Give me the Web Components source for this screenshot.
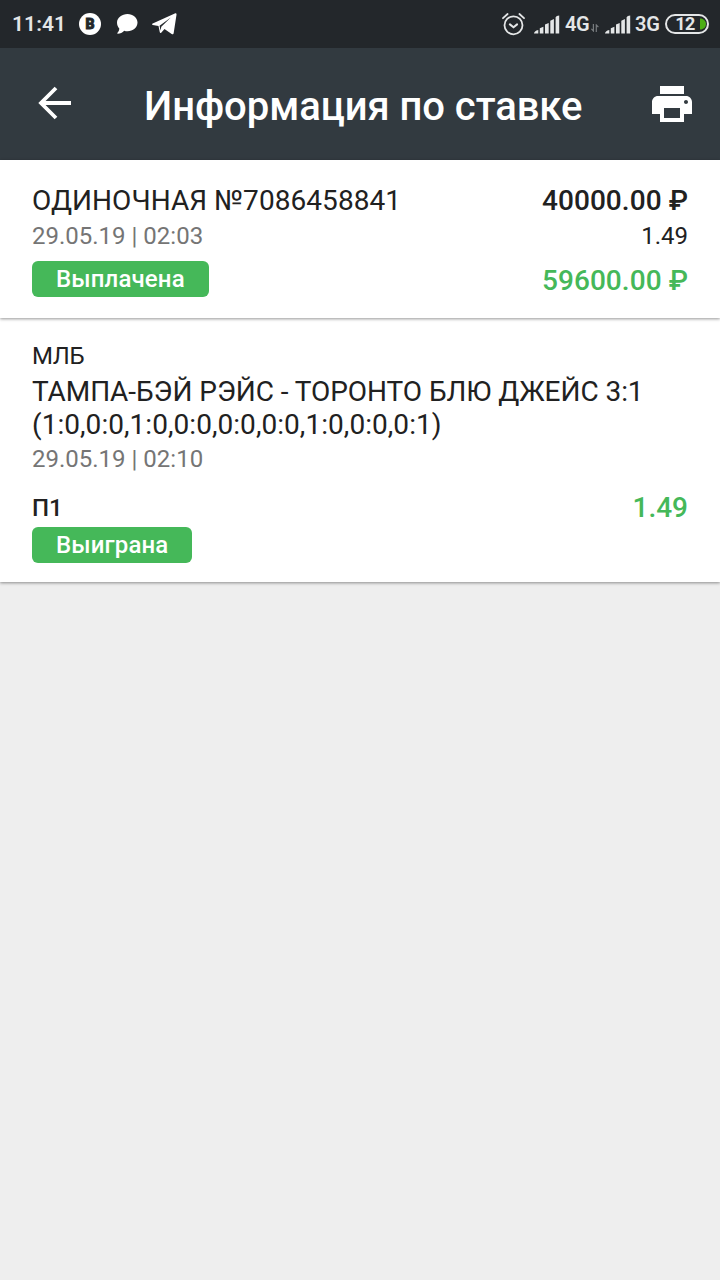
<!DOCTYPE html>
<html lang="ru">
<head>
<meta charset="utf-8">
<title>Информация по ставке</title>
<style>
  html, body { margin: 0; height: 100%; }
  body { background: #eeeeee; color: #212121; font-family: Roboto, "Liberation Sans", sans-serif; overflow: hidden; }
</style>
</head>
<body>
<bet-screen></bet-screen>
<script>
const define = (name, html) => {
  const template = document.createElement('template');
  template.innerHTML = html;
  customElements.define(name, class extends HTMLElement {
    constructor() {
      super();
      this.attachShadow({ mode: 'open' }).append(template.content.cloneNode(true));
    }
  });
};

define('signal-bars', `
<style>:host{display:block;width:26px;height:19px}svg{display:block}</style>
<svg width="26" height="19" viewBox="0 0 26 19" fill="#e4e6e7">
  <path d="M0 18.500q0-2.600 4.300-3.600v3.600zM5.800 13.200l3.600-1.400v6.700H5.800zM11 9.600l3.700-1.600v10.500H11zM16.300 5.700l3.600-1.700v14.500h-3.600zM21.600 2.200q.8-1.700 3.600-1.800v18.100h-3.600z"/>
</svg>`);

define('battery-level', `
<style>
  :host{display:flex;box-sizing:border-box;width:44px;height:20px;border:2px solid #e4e6e7;border-radius:10px;padding:1px;align-items:center}
  span{flex:1;text-align:center;font:700 18px/16px Roboto,sans-serif;letter-spacing:-.6px;padding-left:2px}
  svg{display:block}
</style>
<span><slot></slot></span>
<svg width="6" height="14" viewBox="0 0 6 14"><path d="M0 1.500h1.500Q6 3 6 7T1.500 12.500H0z" fill="#4cae15"/></svg>`);

define('status-bar', `
<style>
  :host{display:flex;height:48px;box-sizing:border-box;background:#23272b;color:#e4e6e7;align-items:center;padding:0 11px 0 12px;justify-content:space-between;font-size:20px;font-weight:600;line-height:24px}
  .g{display:flex;align-items:center}
  svg{display:block}
  .clock{width:67px;letter-spacing:.1px;font-size:21px}
  .chat{margin-left:15px}.send{margin-left:14px}
  .alarm{margin-right:9px}
  .n1{width:25px;margin-left:5px;letter-spacing:-.5px}.n2{width:25px;margin-left:4px;letter-spacing:-.3px}
  .arrows{margin:8px 6px 0 1px}
  battery-level{margin-left:5px}
</style>
<div class="g">
  <span class="clock">11:41</span>
  <svg width="22" height="22" viewBox="0 0 22 22"><circle cx="11" cy="11" r="11" fill="#fff"/><text x="11" y="16.200" text-anchor="middle" font-family="Roboto" font-size="14" font-weight="900" fill="#23272b" stroke="#23272b" stroke-width=".9">B</text></svg>
  <svg class="chat" width="22" height="20" viewBox="0 0 22 20"><path d="M11.500 0C17 0 21.500 3.600 21.500 8.600S17 17.200 11.500 17.200c-1.200 0-2.300-.1-3.300-.5C6.600 18.500 4 19.700 1.800 19.700c-.6 0-.7-.5-.3-.9 1.200-1.200 1.800-2.700 1.800-4.200C1.800 13 1 10.900 1 8.600 1 3.600 6 0 11.500 0z" fill="#fff"/></svg>
  <svg class="send" width="25" height="22" viewBox="0 0 25 22"><path d="M.7 10.500 22.800.4c1.200-.5 1.900 0 1.700 1.300L21.700 20.100c-.2 1.200-1 1.600-2 .9L12.500 16l-3.300 3.700c-.5.5-1.200.4-1.400-.4L6.500 13 .8 11.900c-.9-.2-.9-1-.1-1.400zM7.600 12.800l.9 4.700.8-3.700 9.500-9.300z" fill="#fff" fill-rule="evenodd"/></svg>
</div>
<div class="g">
  <svg class="alarm" width="23" height="23" viewBox="0 0 23 23" fill="none" stroke="#e4e6e7" stroke-width="1.800" stroke-linecap="round"><circle cx="11.500" cy="12.300" r="9"/><path d="M1 5.200 5.600 1M22 5.200 17.400 1"/><path d="m7.900 11.400 3.600 2.900 3.600-2.900" stroke-width="2"/></svg>
  <signal-bars></signal-bars><span class="n1">4G</span>
  <svg class="arrows" width="8" height="8" viewBox="0 0 8 8" fill="none" stroke="#777b7e" stroke-width="1.200"><path d="M2.400 0v7L.3 4.800M5.300 8V1l2.100 2.200"/></svg>
  <signal-bars></signal-bars><span class="n2">3G</span>
  <battery-level>12</battery-level>
</div>`);

define('app-header', `
<style>
  :host{display:flex;height:112px;box-sizing:border-box;background:#323a40;color:#fff;align-items:center;padding:0 28px 0 38px}
  svg{display:block}
  .back{margin-bottom:2px}
  h1{flex:1;margin:4px 0 0 72px;font-size:40px;line-height:47px;font-weight:500;letter-spacing:-.05px;white-space:nowrap}
</style>
<svg class="back" width="34" height="34" viewBox="0 0 34 34" fill="none" stroke="#fff" stroke-width="3.800"><path d="M18 2 3 17l15 15M2.500 17H33"/></svg>
<h1><slot></slot></h1>
<svg width="40" height="36" viewBox="2 3 20 18" fill="#fff"><path d="M19 8H5c-1.660 0-3 1.340-3 3v6h4v4h12v-4h4v-6c0-1.660-1.340-3-3-3zm-3 11H8v-5h8v5zm3-7c-.55 0-1-.45-1-1s.45-1 1-1 1 .45 1 1-.45 1-1 1zm-1-9H6v4h12V3z"/></svg>`);

define('status-badge', `
<style>:host{display:block;width:max-content;box-sizing:border-box;height:36px;padding:0 24px;border-radius:6px;background:#45b859;color:#fff;font-size:24px;line-height:36px;font-weight:500;letter-spacing:.14px}</style>
<slot></slot>`);

define('info-card', `
<style>:host{display:block;position:relative;box-sizing:border-box;background:#fff;padding:24px 32px 0;box-shadow:0 1px 3px rgba(0,0,0,.42)}</style>
<slot></slot>`);

define('bet-summary', `
<style>
  :host{display:flex;justify-content:space-between;font-size:24px;line-height:28px}
  .big{font-size:28px;line-height:33px;letter-spacing:.07px}
  .date{color:#757575;margin-top:5px}
  .amounts{text-align:right}
  .bold{font-weight:500}.coef{margin-top:5px}
  .win{color:#45b859;margin-top:14px}
  status-badge{margin-top:11px}
</style>
<div><div class="big"><slot name="title"></slot></div><div class="date"><slot name="date"></slot></div><status-badge><slot name="status"></slot></status-badge></div>
<div class="amounts"><div class="big bold"><slot name="stake"></slot></div><div class="coef"><slot name="coef"></slot></div><div class="big bold win"><slot name="win"></slot></div></div>`);

define('bet-event', `
<style>
  :host{display:block;font-size:24px;line-height:28px}
  .league{letter-spacing:-.3px}
  .match{font-size:28px;line-height:33px;margin-top:5px}
  .teams{letter-spacing:-.05px}.score{letter-spacing:.05px}
  .date{color:#757575;margin-top:4px}
  .pick{display:flex;justify-content:space-between;align-items:flex-start;margin-top:18px;font-weight:500}
  .name{padding-top:3px}
  .coef{font-size:28px;line-height:33px;color:#45b859}
  status-badge{margin-top:3px}
</style>
<div class="league"><slot name="league"></slot></div>
<div class="match"><div class="teams"><slot name="teams"></slot></div><div class="score"><slot name="score"></slot></div></div>
<div class="date"><slot name="date"></slot></div>
<div class="pick"><span class="name"><slot name="pick"></slot></span><span class="coef"><slot name="coef"></slot></span></div>
<status-badge><slot name="status"></slot></status-badge>`);

define('bet-screen', `
<style>
  :host{display:flex;flex-direction:column;height:100vh;background:#eee}
  .sum{height:158px}.event{height:264px}
  .sum{z-index:1}
</style>
<status-bar></status-bar>
<app-header>Информация по ставке</app-header>
<info-card class="sum"><bet-summary>
  <span slot="title">ОДИНОЧНАЯ №7086458841</span>
  <span slot="date">29.05.19 | 02:03</span>
  <span slot="status">Выплачена</span>
  <span slot="stake">40000.00 ₽</span>
  <span slot="coef">1.49</span>
  <span slot="win">59600.00 ₽</span>
</bet-summary></info-card>
<info-card class="event"><bet-event>
  <span slot="league">МЛБ</span>
  <span slot="teams">ТАМПА-БЭЙ РЭЙС - ТОРОНТО БЛЮ ДЖЕЙС 3:1</span>
  <span slot="score">(1:0,0:0,1:0,0:0,0:0,0:0,1:0,0:0,0:1)</span>
  <span slot="date">29.05.19 | 02:10</span>
  <span slot="pick">П1</span>
  <span slot="coef">1.49</span>
  <span slot="status">Выиграна</span>
</bet-event></info-card>`);
</script>
</body>
</html>
